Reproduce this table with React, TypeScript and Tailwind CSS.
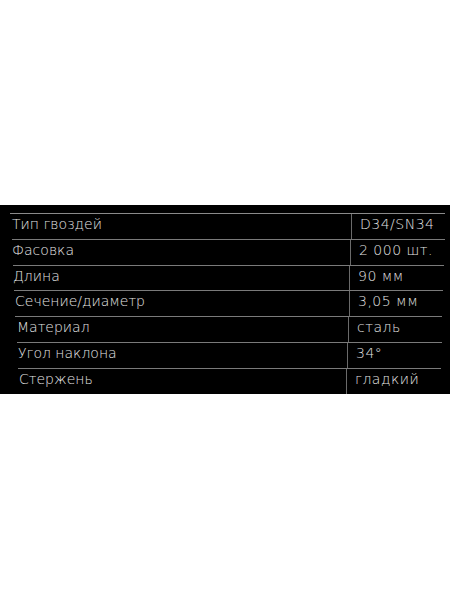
const rows = [
  { label: "Тип гвоздей", value: "D34/SN34", ml: "ml-[10px]", mr: "mr-[5px]", col: "w-[341px]", pl: "pl-[2px]" },
  { label: "Фасовка", value: "2 000 шт.", ml: "ml-[12px]", mr: "mr-[5px]", col: "w-[338px]", pl: "pl-[0px]" },
  { label: "Длина", value: "90 мм", ml: "ml-[13px]", mr: "mr-[6px]", col: "w-[336px]", pl: "pl-[0px]" },
  { label: "Сечение/диаметр", value: "3,05 мм", ml: "ml-[14px]", mr: "mr-[7px]", col: "w-[335px]", pl: "pl-[1px]" },
  { label: "Материал", value: "сталь", ml: "ml-[15px]", mr: "mr-[8px]", col: "w-[333px]", pl: "pl-[2px]" },
  { label: "Угол наклона", value: "34°", ml: "ml-[17px]", mr: "mr-[8px]", col: "w-[330px]", pl: "pl-[1px]" },
  { label: "Стержень", value: "гладкий", ml: "ml-[18px]", mr: "mr-[9px]", col: "w-[328px]", pl: "pl-[1px]" },
]

export default function App() {
  return (
    <div className="w-[450px] h-[600px] bg-white flex flex-col font-['DejaVu_Sans',sans-serif]">
      <div className="h-[205px]" />
      <div className="h-[189px] bg-black pt-[8px] flex flex-col overflow-hidden">
        {rows.map((r, i) => (
          <div
            key={r.label}
            className={`flex h-[25.8px] shrink-0 ${r.ml} ${r.mr} ${i === 0 ? "border-t border-[#8a8a8a]" : "border-t border-[#7a7a7a]"}`}
          >
            <div className={`${r.col} ${r.pl} text-[14px] leading-[20px] font-extralight text-[#e4e4e4]`}>
              {r.label}
            </div>
            <div className="flex-1 border-l border-[#6a6a6a] pl-[8px] text-[14px] leading-[20px] font-extralight tracking-[0.5px] text-[#e4e4e4]">
              {r.value}
            </div>
          </div>
        ))}
      </div>
      <div className="flex-1 bg-white" />
    </div>
  )
}
